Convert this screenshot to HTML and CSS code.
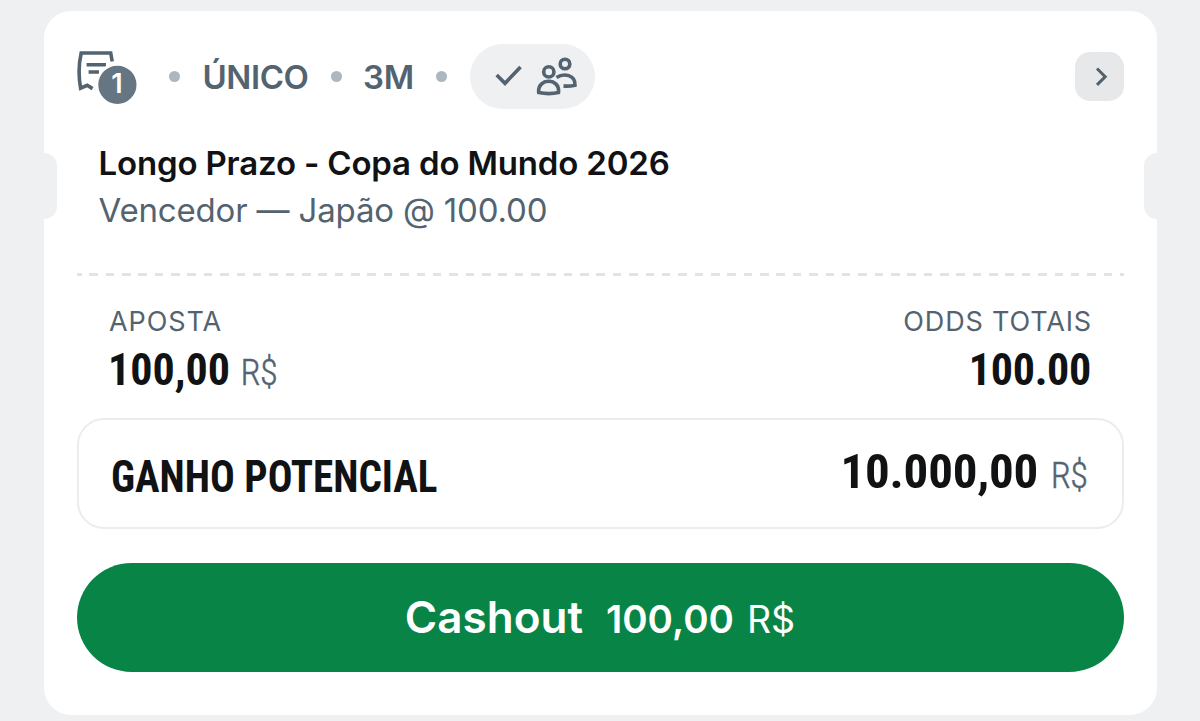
FILE: index.html
```html
<!DOCTYPE html>
<html lang="pt">
<head>
<meta charset="utf-8">
<title>Aposta</title>
<link rel="stylesheet" href="styles.css">
</head>
<body>
<main class="card">
  <span class="notch notch-left"></span>
  <span class="notch notch-right"></span>
  <header class="head">
    <div class="slip">
      <svg class="slip-icon" width="62" height="60" viewBox="0 0 62 60" fill="none" stroke="#53636f" stroke-width="3.6">
        <path d="M35.200 17.500L33.700 9H4.200Q.3 26 3.600 44.200L10.200 41.300L15.600 44.600"/>
        <path d="M9.600 20.800H29M11.600 28H22" stroke-width="3.4"/>
        <circle cx="40.400" cy="40.800" r="20.400" fill="#657582" stroke="#fff" stroke-width="2.600"/>
      </svg>
      <span class="count">1</span>
    </div>
    <i class="dot"></i>
    <span class="kind">ÚNICO</span>
    <i class="dot"></i>
    <span class="age">3M</span>
    <i class="dot"></i>
    <div class="pill">
      <svg width="125" height="65" viewBox="0 0 125 65" fill="none" stroke="#53636f" stroke-width="3.6">
        <path d="M26.700 31L35 39.300L50.500 23"/>
        <circle cx="78.800" cy="27.900" r="5.100"/>
        <circle cx="95" cy="20" r="4.800"/>
        <path d="M68.700 48.600C67 33.500 90.500 33.500 88.500 48.600Q79 50.600 68.700 48.600Z"/>
        <path d="M86.500 33.600C94 28.500 105.500 31 105 41.200Q99 42.500 93.500 41.900"/>
      </svg>
    </div>
    <button class="open" aria-label="Abrir">
      <svg width="49" height="49" viewBox="0 0 49 49" fill="none" stroke="#53616b" stroke-width="3"><path d="M22 16.500L30.200 24.700L22 32.900"/></svg>
    </button>
  </header>
  <section class="pick">
    <div class="title">Longo Prazo - Copa do Mundo 2026</div>
    <div class="selection">Vencedor — Japão @ 100.00</div>
  </section>
  <div class="divider"></div>
  <section class="totals">
    <div class="total">
      <span class="label">APOSTA</span>
      <div class="amount"><b>100,00</b><small>R$</small></div>
    </div>
    <div class="total total-right">
      <span class="label">ODDS TOTAIS</span>
      <div class="amount"><b>100.00</b></div>
    </div>
  </section>
  <section class="gain">
    <span class="gain-label">GANHO POTENCIAL</span>
    <div class="gain-value"><b>10.000,00</b><small>R$</small></div>
  </section>
  <button class="cashout"><span class="cash-label">Cashout</span><span class="cash-value">100,00</span><span class="cash-unit">R$</span></button>
</main>
</body>
</html>
```
FILE: styles.css
```css
* { box-sizing: border-box; }
body { margin: 0; height: 721px; overflow: hidden; background: #eff0f2; padding: 11px 43px 0 44px; font-family: Inter, "Liberation Sans", sans-serif; color: #101214; }
button { border: 0; padding: 0; font: inherit; }
svg { display: block; }
.card { position: relative; height: 704px; background: #fff; border-radius: 27px; padding: 33px 33px 0; display: flex; flex-direction: column; }
.notch { position: absolute; top: 142px; width: 13px; height: 66px; background: #eff0f2; }
.notch-left { left: 0; border-radius: 0 13px 13px 0; }
.notch-right { right: 0; border-radius: 13px 0 0 13px; }
.head { display: flex; align-items: center; height: 65px; color: #53636f; font-size: 33px; font-weight: 600; line-height: 65px; }
.slip { position: relative; width: 62px; height: 60px; margin: 0 30px 6px 0; }
.count { position: absolute; left: 21px; top: 21px; width: 38px; line-height: 38px; text-align: center; font-size: 27px; color: #fff; }
.dot { width: 11px; height: 11px; border-radius: 50%; background: #adb7be; }
.kind { width: 105px; margin: 0 23.5px 0 22.5px; padding-top: 2px; letter-spacing: -.45px; white-space: nowrap; }
.age { width: 50px; margin: 0 23px 0 21px; padding-top: 2px; letter-spacing: -.3px; white-space: nowrap; }
.pill { width: 125px; height: 65px; border-radius: 33px; background: #eff0f2; margin-left: 23px; }
.open { width: 49px; height: 49px; border-radius: 15px; background: #e7e8ea; margin-left: auto; }
.pick { padding: 34px 21.5px 0; }
.title { font-size: 33px; font-weight: 600; line-height: 40px; letter-spacing: -.17px; }
.selection { font-size: 33px; line-height: 40px; margin-top: 7px; letter-spacing: -.17px; color: #53636f; }
.divider { height: 3px; margin-top: 43px; background: repeating-linear-gradient(90deg, #e3e3e4 0 4.5px, transparent 4.5px 12.300px, #e3e3e4 12.300px 16.360px); }
.totals { display: flex; justify-content: space-between; padding: 30px 33px 0 32px; }
.total { display: flex; flex-direction: column; }
.total-right { align-items: flex-end; }
.label { font-size: 27px; line-height: 32px; color: #53636f; letter-spacing: .9px; }
.total-right .label { letter-spacing: .85px; margin-right: -1px; }
.total-right .amount { letter-spacing: -.3px; }
.amount, .gain { font-family: "Roboto Condensed", Roboto, sans-serif; font-stretch: 75%; }
.amount { display: flex; align-items: baseline; gap: 10.5px; line-height: 50px; margin-top: 7px; font-size: 44px; }
.amount b { margin-left: -1px; }
small { font-size: 36.5px; font-weight: 300; letter-spacing: -.5px; color: #53636f; -webkit-text-stroke: .4px #53636f; }
.gain { display: flex; justify-content: space-between; align-items: center; height: 111px; margin-top: 20px; border: 2px solid #ececed; border-radius: 27px; padding: 0 34.5px 0 32px; }
.gain-label { font-size: 43.5px; font-weight: 700; padding-top: 8px; transform: scaleX(.945); transform-origin: left; }
.gain-value { display: flex; align-items: baseline; gap: 12.5px; font-size: 49px; padding-bottom: 4px; }
.gain-value b { letter-spacing: -.2px; }
.cashout { display: flex; justify-content: center; align-items: baseline; height: 109px; line-height: 109px; margin-top: 33.5px; border-radius: 55px; background: #088546; color: #fff; }
.cash-label { font-size: 44px; font-weight: 600; }
.cash-value { font-size: 38.5px; font-weight: 600; margin: 0 13px 0 23px; }
.cash-unit { font-size: 37.5px; font-weight: 400; margin-right: 1px; }
```
